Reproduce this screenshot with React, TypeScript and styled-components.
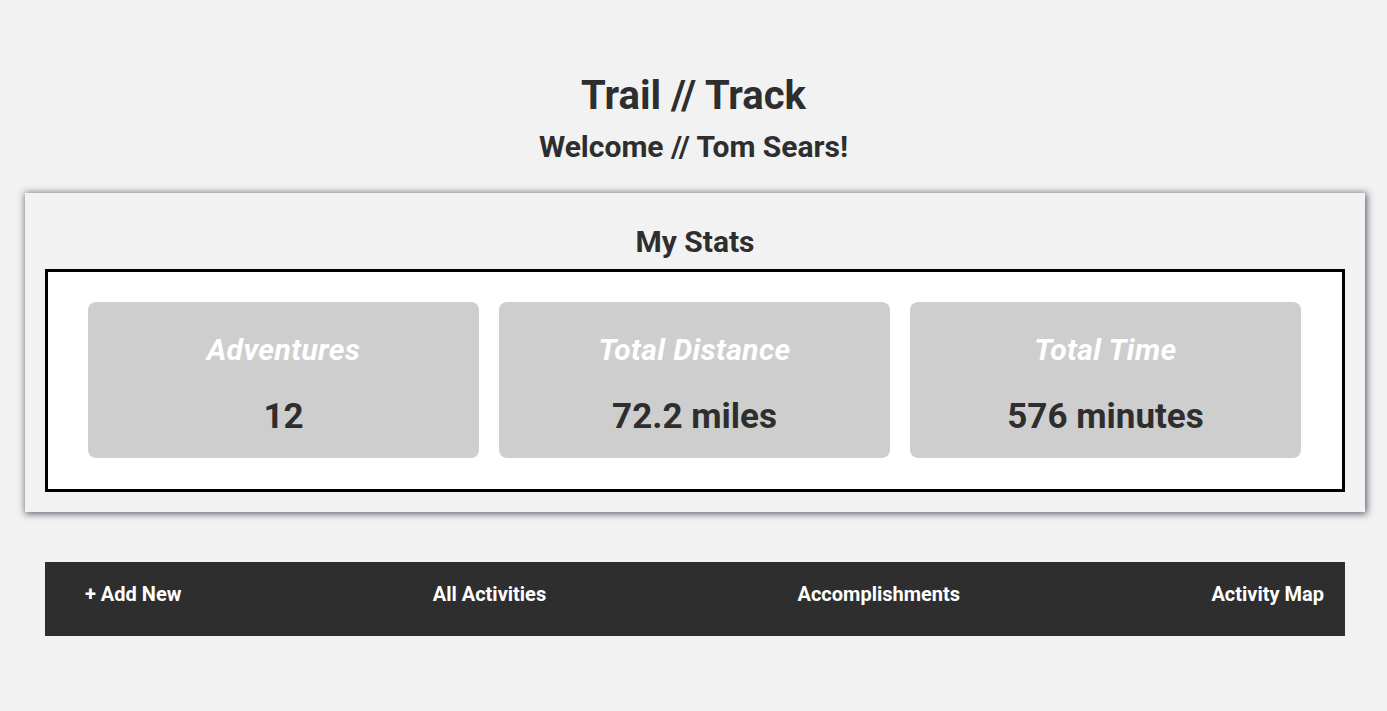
import React from "react";
import styled, { createGlobalStyle } from "styled-components";

const GlobalStyle = createGlobalStyle`
  html, body {
    margin: 0;
    padding: 0;
    background: #f2f2f2;
  }
  body {
    font-family: Roboto, "Liberation Sans", sans-serif;
    color: #2e2e2e;
  }
`;

const Page = styled.div`
  display: flex;
  flex-direction: column;
  padding-top: 72px;
`;

const Header = styled.header`
  display: flex;
  flex-direction: column;
  align-items: center;
  gap: 10px;
`;

const Title = styled.h1`
  margin: 0;
  font-size: 40px;
  font-weight: 700;
  line-height: normal;
`;

const Welcome = styled.h2`
  margin: 0;
  font-size: 30px;
  font-weight: 700;
  line-height: normal;
`;

const StatsPanel = styled.section`
  margin: 29px 22px 0 25px;
  padding: 31px 20px 20px 20px;
  background: #f2f2f2;
  box-shadow: 1px 1px 7px 1px rgba(70, 75, 95, 0.85);
  display: flex;
  flex-direction: column;
  align-items: stretch;
`;

const PanelTitle = styled.h3`
  margin: 0 0 10px 0;
  text-align: center;
  font-size: 30px;
  font-weight: 700;
  line-height: normal;
`;

const StatsBox = styled.div`
  border: 3px solid #000;
  background: #fff;
  padding: 30px 41px 31px 40px;
  display: flex;
  gap: 20px;
`;

const StatCard = styled.div`
  flex: 1;
  height: 156px;
  box-sizing: border-box;
  background: #cecece;
  border-radius: 8px;
  padding-top: 30px;
  display: flex;
  flex-direction: column;
  align-items: center;
  gap: 29px;
`;

const StatLabel = styled.div`
  font-size: 30px;
  font-style: italic;
  font-weight: 700;
  letter-spacing: 0.4px;
  color: #ffffff;
  line-height: normal;
`;

const StatValue = styled.div`
  font-size: 35px;
  font-weight: 700;
  color: #2e2e2e;
  line-height: normal;
`;

const NavBar = styled.nav`
  margin: 50px 42px 0 45px;
  height: 74px;
  box-sizing: border-box;
  background: #2e2e2e;
  padding: 20px 21px 0 40px;
  display: flex;
  justify-content: space-between;
  align-items: flex-start;
`;

const NavItem = styled.a`
  color: #ffffff;
  font-size: 20px;
  font-weight: 700;
  line-height: normal;
  text-decoration: none;
  cursor: pointer;
`;

const stats = [
  { label: "Adventures", value: "12" },
  { label: "Total Distance", value: "72.2 miles" },
  { label: "Total Time", value: "576 minutes" },
];

const navItems = ["+ Add New", "All Activities", "Accomplishments", "Activity Map"];

export default function App() {
  return (
    <>
      <GlobalStyle />
      <Page>
        <Header>
          <Title>Trail // Track</Title>
          <Welcome>Welcome // Tom Sears!</Welcome>
        </Header>
        <StatsPanel>
          <PanelTitle>My Stats</PanelTitle>
          <StatsBox>
            {stats.map((s) => (
              <StatCard key={s.label}>
                <StatLabel>{s.label}</StatLabel>
                <StatValue>{s.value}</StatValue>
              </StatCard>
            ))}
          </StatsBox>
        </StatsPanel>
        <NavBar>
          {navItems.map((n) => (
            <NavItem key={n}>{n}</NavItem>
          ))}
        </NavBar>
      </Page>
    </>
  );
}
